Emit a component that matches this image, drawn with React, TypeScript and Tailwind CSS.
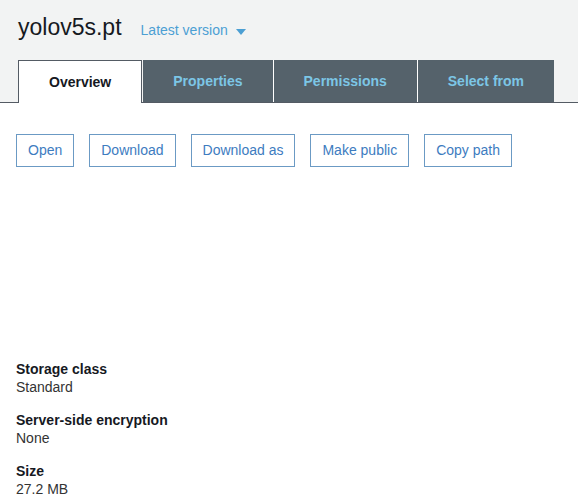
import React from 'react';

const tabs = ['Properties', 'Permissions', 'Select from'];
const actions = ['Open', 'Download', 'Download as', 'Make public', 'Copy path'];
const details = [
  { label: 'Storage class', value: 'Standard' },
  { label: 'Server-side encryption', value: 'None' },
  { label: 'Size', value: '27.2 MB' },
];

export default function App() {
  return (
    <div className="min-h-[504px] w-[578px] overflow-hidden bg-white font-['Liberation_Sans',Arial,sans-serif]">
      {/* Header with tabs */}
      <div className="bg-[#f2f3f3] pt-[13px]">
        <div className="flex items-baseline pl-[18px]">
          <h1 className="text-[23px] leading-[28px] text-[#16191f]">yolov5s.pt</h1>
          <button className="ml-[19px] flex items-baseline text-[14px] text-[#4c9fd3]">
            Latest version
            <svg width="10" height="6" viewBox="0 0 10 6" className="ml-[8px] self-center mt-[2px]">
              <path d="M0 0 L10 0 L5 6 Z" fill="#4c9fd3" />
            </svg>
          </button>
        </div>
        <div className="mt-[19px] flex border-b border-[#545b64] pl-[18px]">
          <div className="-mb-px flex h-[43px] items-center border border-b-0 border-[#545b64] bg-white px-[30px] text-[14px] font-bold text-[#16191f]">
            Overview
          </div>
          <div className="ml-px flex">
            {tabs.map((t, i) => (
              <div
                key={t}
                className={
                  'flex h-[42px] items-center bg-[#55626b] px-[30px] text-[14px] font-bold text-[#7cc6e6] ' +
                  (i > 0 ? 'border-l border-white' : '')
                }
              >
                {t}
              </div>
            ))}
          </div>
        </div>
      </div>

      {/* Actions */}
      <div className="mt-[31px] flex gap-[15px] pl-[16px]">
        {actions.map((a) => (
          <button
            key={a}
            className="h-[33px] border border-[#6b9ac4] px-[11px] text-[14px] text-[#3d7cbf]"
          >
            {a}
          </button>
        ))}
      </div>

      {/* Details */}
      <div className="mt-[193px] flex flex-col gap-[15px] pl-[16px]">
        {details.map((d) => (
          <div key={d.label} className="text-[14px] leading-[18px]">
            <div className="font-bold text-[#16191f]">{d.label}</div>
            <div className="text-[#333333]">{d.value}</div>
          </div>
        ))}
      </div>
    </div>
  );
}
